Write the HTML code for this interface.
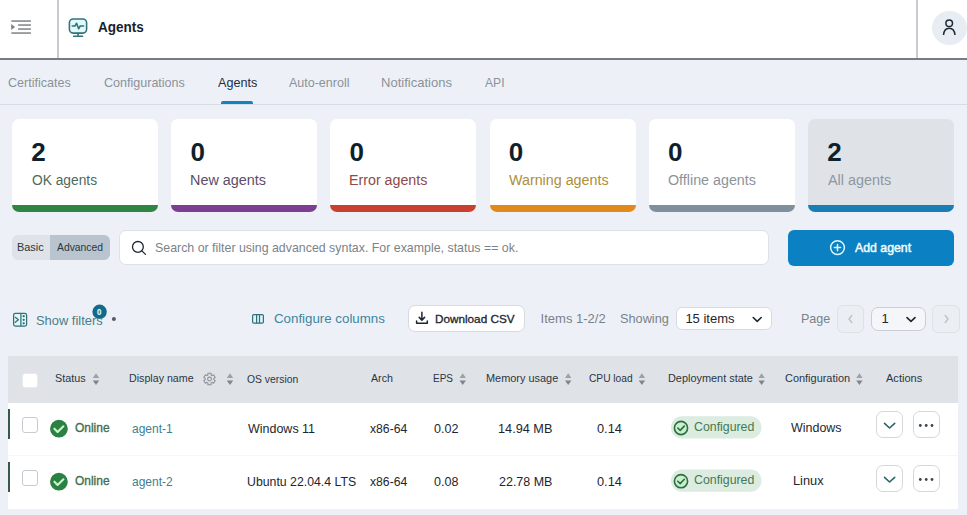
<!DOCTYPE html>
<html><head><meta charset="utf-8"><style>
*{box-sizing:border-box;margin:0;padding:0}
html,body{width:967px;height:515px;overflow:hidden}
body{background:#edf1f7;font-family:"Liberation Sans",sans-serif;position:relative}
.a{position:absolute}
.t{position:absolute;white-space:nowrap}
svg{position:absolute;overflow:visible}
.card{position:absolute;top:119px;width:146px;height:93px;background:#fff;border-radius:7px;overflow:hidden}
.card .bar{position:absolute;left:0;bottom:0;width:100%;height:7px}
.cb{position:absolute;width:15px;height:15px;background:#fff;border:1px solid #c5cbd1;border-radius:3px}
.ab{position:absolute;width:27px;height:27px;background:#fff;border:1px solid #d3d8dc;border-radius:7px}

</style></head><body>
<!-- header -->
<div class="a" style="left:0;top:0;width:967px;height:60px;background:#fff;border-bottom:2px solid #777c81"></div>
<div class="a" style="left:57px;top:0;width:2px;height:58px;background:#c8cbcf"></div>
<div class="a" style="left:916px;top:0;width:2px;height:58px;background:#c8cbcf"></div>
<!-- hamburger -->
<svg style="left:0;top:0" width="60" height="58">
  <g fill="#7f8388">
    <rect x="11.3" y="20.3" width="19.6" height="1.5"/>
    <rect x="18.1" y="24.3" width="12.8" height="1.5"/>
    <rect x="18.1" y="28.3" width="12.8" height="1.5"/>
    <rect x="11.3" y="32.3" width="19.6" height="1.5"/>
    <path d="M11.2 24 L15.1 27 L11.2 30 Z"/>
  </g>
</svg>
<!-- monitor icon -->
<svg style="left:0;top:0" width="100" height="58">
  <g fill="none" stroke="#2f7479" stroke-width="1.55" stroke-linecap="round" stroke-linejoin="round">
    <rect x="69.4" y="18.9" width="17.2" height="14.2" rx="3.8" fill="#e3f8fa"/>
    <path d="M72.2 26 L75 26 L76.6 23.2 L78.6 28.8 L80.2 26 L83.6 26"/>
    <path d="M78 33.2 L78 36 M73.6 36.3 L82.6 36.3"/>
  </g>
</svg>
<!-- avatar -->
<div class="a" style="left:932px;top:10.5px;width:34.5px;height:34.5px;border-radius:50%;background:#e8edf3"></div>
<svg style="left:0;top:0" width="967" height="58">
  <g fill="none" stroke="#1f2a35" stroke-width="1.5">
    <circle cx="949.2" cy="23.2" r="3.3"/>
    <path d="M943.5 35 C944 30 946.5 28.3 949.2 28.3 C952 28.3 954.5 30 955 35"/>
  </g>
</svg>
<!-- tabs -->
<div class="a" style="left:0;top:104px;width:967px;height:1px;background:#d6dce3"></div>
<div class="a" style="left:221px;top:100.5px;width:32px;height:3.5px;background:#1383bf;border-radius:2px 2px 0 0"></div>
<!-- cards -->
<div class="card" style="left:12px"><div class="bar" style="background:#2f8642"></div></div>
<div class="card" style="left:171.2px"><div class="bar" style="background:#7b3e90"></div></div>
<div class="card" style="left:330.4px"><div class="bar" style="background:#c9402f"></div></div>
<div class="card" style="left:489.6px"><div class="bar" style="background:#e0891c"></div></div>
<div class="card" style="left:648.8px"><div class="bar" style="background:#7f909c"></div></div>
<div class="card" style="left:808px;background:#dfe3e7"><div class="bar" style="background:#1a7db6"></div></div>
<!-- toggle -->
<div class="a" style="left:12px;top:235px;width:98px;height:25px;border-radius:6px;background:#dfe3e8;overflow:hidden">
  <div class="a" style="left:38px;top:0;width:60px;height:25px;background:#b9c4cf"></div>
</div>
<!-- search -->
<div class="a" style="left:119px;top:230px;width:649.5px;height:35px;border-radius:7px;background:#fff;border:1px solid #dde2e8"></div>
<svg style="left:0;top:0" width="967" height="515">
  <g fill="none" stroke="#1d2630" stroke-width="1.3" stroke-linecap="round">
    <circle cx="137.9" cy="246.9" r="5.4"/>
    <path d="M141.9 250.9 L145.5 254.4"/>
  </g>
</svg>
<!-- add agent -->
<div class="a" style="left:788px;top:230px;width:166px;height:36px;border-radius:6px;background:#0b80c2"></div>
<svg style="left:0;top:0" width="967" height="515">
  <g fill="none" stroke="#d9f7ff" stroke-width="1.5" stroke-linecap="round">
    <circle cx="837.5" cy="247.6" r="6.9"/>
    <path d="M837.5 244.5 V250.7 M834.4 247.6 H840.6"/>
  </g>
</svg>
<!-- toolbar icons -->
<svg style="left:0;top:0" width="967" height="515">
  <g fill="none" stroke="#2f7077" stroke-width="1.25" stroke-linejoin="round">
    <rect x="13.6" y="313.4" width="13" height="12.6" rx="1.8" fill="#e3f7f9"/>
    <path d="M20.9 313.4 V326"/>
    <path d="M15.3 317.3 L18.4 319.8 L15.3 322.3" stroke-linecap="round"/>
  </g>
  <g fill="#2f7077"><circle cx="23.7" cy="316.2" r="1.15"/><circle cx="23.7" cy="319.8" r="1.15"/><circle cx="23.7" cy="323.3" r="1.15"/></g>
  <circle cx="99.6" cy="311.8" r="7.2" fill="#126b8a"/>
  <circle cx="113.9" cy="319" r="2" fill="#4a5e68"/>
  <g fill="none" stroke="#356f7b" stroke-width="1.2">
    <rect x="252.6" y="314.6" width="10.8" height="8.6" rx="1.2" fill="#d8f6f8"/>
    <path d="M256.6 314.6 V323.2 M259.5 314.6 V323.2"/>
  </g>
</svg>
<div class="t" style="left:96.9px;top:307.6px;font-size:9px;line-height:9px;font-weight:700;color:#d0f9ff;-webkit-text-stroke:0.2px #d0f9ff;transform:scaleX(0.88);transform-origin:0 0">0</div>
<!-- download csv -->
<div class="a" style="left:408px;top:305px;width:117px;height:26.5px;border-radius:7px;background:#fff;border:1px solid #d5dbe1"></div>
<svg style="left:0;top:0" width="967" height="515">
  <g fill="none" stroke="#1d2630" stroke-width="1.5" stroke-linecap="round" stroke-linejoin="round">
    <path d="M421.9 312.3 V320 M419.2 317.4 L421.9 320.1 L424.6 317.4"/>
    <path d="M416.6 321 V323.3 H427.3 V321"/>
  </g>
</svg>
<!-- items select -->
<div class="a" style="left:676px;top:307px;width:95.5px;height:23px;border-radius:6px;background:#fff;border:1px solid #d5dbe1"></div>
<div class="a" style="left:837px;top:305px;width:27px;height:28px;border-radius:6px;background:#ebeff4;border:1px solid #dde2e7"></div>
<div class="a" style="left:871px;top:307px;width:54.5px;height:24px;border-radius:7px;background:#f4f6f9;border:1px solid #c9cfd5"></div>
<div class="a" style="left:932px;top:305px;width:27.5px;height:28px;border-radius:6px;background:#ebeff4;border:1px solid #dde2e7"></div>
<svg style="left:0;top:0" width="967" height="515">
  <g fill="none" stroke="#1d2630" stroke-width="1.6" stroke-linecap="round" stroke-linejoin="round">
    <path d="M753.2 317.5 L757.2 321.3 L761.2 317.5"/>
    <path d="M907 317.6 L911 321.3 L915 317.6"/>
  </g>
  <g fill="none" stroke="#b9c1c8" stroke-width="1.3" stroke-linecap="round" stroke-linejoin="round">
    <path d="M851.8 315.5 L849 319 L851.8 322.5"/>
    <path d="M945.2 315.5 L948 319 L945.2 322.5"/>
  </g>
</svg>
<!-- table -->
<div class="a" style="left:8px;top:356px;width:949.5px;height:46.5px;background:#dfe3e8"></div>
<div class="a" style="left:8px;top:402.5px;width:949.5px;height:106px;background:#fff"></div>
<div class="a" style="left:8px;top:454.5px;width:949.5px;height:1px;background:#f6f7f9"></div>
<div class="a" style="left:8px;top:409px;width:2px;height:30px;background:#38594a"></div>
<div class="a" style="left:8px;top:462px;width:2px;height:30px;background:#38594a"></div>
<div class="cb" style="left:22px;top:372.5px;width:15.5px;height:15px;border-color:#e9ecef"></div>
<div class="cb" style="left:22px;top:417px;width:15.5px;height:15.5px"></div>
<div class="cb" style="left:22px;top:470px;width:15.5px;height:15.5px"></div>
<svg style="left:0;top:0" width="967" height="515">
  <path d="M92.8 378 L96.0 373.3 L99.2 378 Z" fill="#9aa1a7"/><path d="M92.8 380.4 L96.0 385 L99.2 380.4 Z" fill="#7f868c"/>
  <path d="M226.8 378 L230.0 373.3 L233.2 378 Z" fill="#9aa1a7"/><path d="M226.8 380.4 L230.0 385 L233.2 380.4 Z" fill="#7f868c"/>
  <path d="M459.5 378 L462.7 373.3 L465.9 378 Z" fill="#9aa1a7"/><path d="M459.5 380.4 L462.7 385 L465.9 380.4 Z" fill="#7f868c"/>
  <path d="M565.0 378 L568.2 373.3 L571.4 378 Z" fill="#9aa1a7"/><path d="M565.0 380.4 L568.2 385 L571.4 380.4 Z" fill="#7f868c"/>
  <path d="M638.7 378 L641.9 373.3 L645.1 378 Z" fill="#9aa1a7"/><path d="M638.7 380.4 L641.9 385 L645.1 380.4 Z" fill="#7f868c"/>
  <path d="M758.4 378 L761.6 373.3 L764.8 378 Z" fill="#9aa1a7"/><path d="M758.4 380.4 L761.6 385 L764.8 380.4 Z" fill="#7f868c"/>
  <path d="M856.2 378 L859.4 373.3 L862.6 378 Z" fill="#9aa1a7"/><path d="M856.2 380.4 L859.4 385 L862.6 380.4 Z" fill="#7f868c"/>
  <path d="M207.87 373.33 L211.13 373.33 L211.11 375.01 L212.15 375.61 L213.60 374.76 L215.22 377.57 L213.76 378.40 L213.76 379.60 L215.22 380.43 L213.60 383.24 L212.15 382.39 L211.11 382.99 L211.13 384.67 L207.87 384.67 L207.89 382.99 L206.85 382.39 L205.40 383.24 L203.78 380.43 L205.24 379.60 L205.24 378.40 L203.78 377.57 L205.40 374.76 L206.85 375.61 L207.89 375.01 Z" fill="none" stroke="#8a9097" stroke-width="1.05" stroke-linejoin="round"/><circle cx="209.5" cy="379" r="1.9" fill="none" stroke="#8a9097" stroke-width="1.05"/>
  <circle cx="58.9" cy="428.7" r="8.9" fill="#2b8043"/><path d="M54.4 428.7 L57.6 432.0 L63.4 426.3" fill="none" stroke="#c8f7c8" stroke-width="2.1" stroke-linecap="round" stroke-linejoin="round"/>
  <rect x="671" y="416.3" width="90.5" height="22.2" rx="11.1" fill="#dcece0"/>
  <circle cx="681" cy="428.0" r="6.6" fill="#c9f0cd" stroke="#2f6e44" stroke-width="1.6"/><path d="M677.8 428.0 L680.2 430.4 L684.3 426.1" fill="none" stroke="#2f6e44" stroke-width="1.6" stroke-linecap="round" stroke-linejoin="round"/>
  <circle cx="58.9" cy="481.7" r="8.9" fill="#2b8043"/><path d="M54.4 481.7 L57.6 485.0 L63.4 479.3" fill="none" stroke="#c8f7c8" stroke-width="2.1" stroke-linecap="round" stroke-linejoin="round"/>
  <rect x="671" y="469.5" width="90.5" height="22.2" rx="11.1" fill="#dcece0"/>
  <circle cx="681" cy="481.2" r="6.6" fill="#c9f0cd" stroke="#2f6e44" stroke-width="1.6"/><path d="M677.8 481.2 L680.2 483.6 L684.3 479.3" fill="none" stroke="#2f6e44" stroke-width="1.6" stroke-linecap="round" stroke-linejoin="round"/>
</svg>
<div class="ab" style="left:876.2px;top:411px"></div><div class="ab" style="left:913px;top:411px"></div>
<div class="ab" style="left:876.2px;top:465px"></div><div class="ab" style="left:913px;top:465px"></div>
<svg style="left:0;top:0" width="967" height="515">
  <path d="M884.5 423.3 L889.6 428 L894.7 423.3" fill="none" stroke="#2c6468" stroke-width="1.6" stroke-linecap="round" stroke-linejoin="round"/>
  <circle cx="920.3" cy="425.5" r="1.4" fill="#3a4650"/>
  <circle cx="926.2" cy="425.5" r="1.4" fill="#3a4650"/>
  <circle cx="932" cy="425.5" r="1.4" fill="#3a4650"/>
  <path d="M884.5 477.3 L889.6 482 L894.7 477.3" fill="none" stroke="#2c6468" stroke-width="1.6" stroke-linecap="round" stroke-linejoin="round"/>
  <circle cx="920.3" cy="479.5" r="1.4" fill="#3a4650"/>
  <circle cx="926.2" cy="479.5" r="1.4" fill="#3a4650"/>
  <circle cx="932" cy="479.5" r="1.4" fill="#3a4650"/>
</svg>

<div class="t" style="left:98.10px;top:20.00px;font-size:14px;line-height:14px;font-weight:700;color:#17222c;letter-spacing:0.000px;transform:scaleX(0.9638);transform-origin:0 0;">Agents</div>
<div class="t" style="left:7.70px;top:76.00px;font-size:13px;line-height:13px;font-weight:400;color:#8a929a;letter-spacing:0.000px;transform:scaleX(0.9662);transform-origin:0 0;">Certificates</div>
<div class="t" style="left:103.90px;top:76.00px;font-size:13px;line-height:13px;font-weight:400;color:#8a929a;letter-spacing:0.000px;transform:scaleX(0.9643);transform-origin:0 0;">Configurations</div>
<div class="t" style="left:217.50px;top:76.00px;font-size:13px;line-height:13px;font-weight:400;color:#1f2d3d;letter-spacing:0.000px;transform:scaleX(0.9700);transform-origin:0 0;">Agents</div>
<div class="t" style="left:289.30px;top:76.00px;font-size:13px;line-height:13px;font-weight:400;color:#8a929a;letter-spacing:0.000px;transform:scaleX(0.9613);transform-origin:0 0;">Auto-enroll</div>
<div class="t" style="left:381.00px;top:76.00px;font-size:13px;line-height:13px;font-weight:400;color:#8a929a;letter-spacing:0.000px;transform:scaleX(1.0029);transform-origin:0 0;">Notifications</div>
<div class="t" style="left:485.20px;top:76.00px;font-size:13px;line-height:13px;font-weight:400;color:#8a929a;letter-spacing:0.000px;transform:scaleX(0.9300);transform-origin:0 0;">API</div>
<div class="t" style="left:31.20px;top:139.00px;font-size:26px;line-height:26px;font-weight:700;color:#0f1f2c;letter-spacing:0.000px;">2</div>
<div class="t" style="left:31.60px;top:173.00px;font-size:14px;line-height:14px;font-weight:400;color:#4f6a5b;letter-spacing:0.000px;transform:scaleX(0.9833);transform-origin:0 0;">OK agents</div>
<div class="t" style="left:190.40px;top:139.00px;font-size:26px;line-height:26px;font-weight:700;color:#0f1f2c;letter-spacing:0.000px;">0</div>
<div class="t" style="left:189.77px;top:173.00px;font-size:14px;line-height:14px;font-weight:400;color:#5b4d68;letter-spacing:0.000px;transform:scaleX(1.0274);transform-origin:0 0;">New agents</div>
<div class="t" style="left:349.60px;top:139.00px;font-size:26px;line-height:26px;font-weight:700;color:#0f1f2c;letter-spacing:0.000px;">0</div>
<div class="t" style="left:348.98px;top:173.00px;font-size:14px;line-height:14px;font-weight:400;color:#8d4a47;letter-spacing:0.000px;transform:scaleX(1.0171);transform-origin:0 0;">Error agents</div>
<div class="t" style="left:508.80px;top:139.00px;font-size:26px;line-height:26px;font-weight:700;color:#0f1f2c;letter-spacing:0.000px;">0</div>
<div class="t" style="left:509.20px;top:173.00px;font-size:14px;line-height:14px;font-weight:400;color:#ad8e3c;letter-spacing:0.000px;transform:scaleX(1.0206);transform-origin:0 0;">Warning agents</div>
<div class="t" style="left:668.00px;top:139.00px;font-size:26px;line-height:26px;font-weight:700;color:#0f1f2c;letter-spacing:0.000px;">0</div>
<div class="t" style="left:668.40px;top:173.00px;font-size:14px;line-height:14px;font-weight:400;color:#8b949b;letter-spacing:0.000px;transform:scaleX(1.0209);transform-origin:0 0;">Offline agents</div>
<div class="t" style="left:827.20px;top:139.00px;font-size:26px;line-height:26px;font-weight:700;color:#0f1f2c;letter-spacing:0.000px;">2</div>
<div class="t" style="left:827.60px;top:173.00px;font-size:14px;line-height:14px;font-weight:400;color:#8d97a1;letter-spacing:0.000px;transform:scaleX(1.0279);transform-origin:0 0;">All agents</div>
<div class="t" style="left:17.21px;top:242.00px;font-size:11px;line-height:11px;font-weight:400;color:#2a3642;letter-spacing:0.000px;transform:scaleX(0.9923);transform-origin:0 0;">Basic</div>
<div class="t" style="left:57.30px;top:242.00px;font-size:11px;line-height:11px;font-weight:400;color:#2a3642;letter-spacing:0.000px;transform:scaleX(0.9408);transform-origin:0 0;">Advanced</div>
<div class="t" style="left:154.85px;top:241.00px;font-size:13px;line-height:13px;font-weight:400;color:#7b838a;letter-spacing:0.000px;transform:scaleX(0.9524);transform-origin:0 0;">Search or filter using advanced syntax. For example, status == ok.</div>
<div class="t" style="left:855.00px;top:241.00px;font-size:13px;line-height:13px;font-weight:400;color:#f0fcff;letter-spacing:0.000px;transform:scaleX(0.9467);transform-origin:0 0;-webkit-text-stroke:0.35px #f0fcff;-webkit-text-stroke:0.5px #f0fcff;">Add agent</div>
<div class="t" style="left:35.71px;top:314.00px;font-size:13px;line-height:13px;font-weight:400;color:#4b7d88;letter-spacing:0.000px;transform:scaleX(0.9924);transform-origin:0 0;">Show filters</div>
<div class="t" style="left:274.10px;top:312.00px;font-size:13px;line-height:13px;font-weight:400;color:#3b86a0;letter-spacing:0.000px;transform:scaleX(1.0231);transform-origin:0 0;">Configure columns</div>
<div class="t" style="left:435.03px;top:314.00px;font-size:11px;line-height:11px;font-weight:400;color:#1d2630;letter-spacing:0.000px;transform:scaleX(1.0662);transform-origin:0 0;-webkit-text-stroke:0.35px #1d2630;-webkit-text-stroke:0.3px #1d2630;">Download CSV</div>
<div class="t" style="left:540.60px;top:312.00px;font-size:13px;line-height:13px;font-weight:400;color:#7a8289;letter-spacing:0.000px;">Items 1-2/2</div>
<div class="t" style="left:619.52px;top:312.00px;font-size:13px;line-height:13px;font-weight:400;color:#7a8289;letter-spacing:0.000px;transform:scaleX(0.9796);transform-origin:0 0;">Showing</div>
<div class="t" style="left:685.40px;top:312.00px;font-size:13px;line-height:13px;font-weight:400;color:#1d2630;letter-spacing:0.000px;">15 items</div>
<div class="t" style="left:800.93px;top:311.50px;font-size:13px;line-height:13px;font-weight:400;color:#7a8289;letter-spacing:0.000px;transform:scaleX(0.9655);transform-origin:0 0;">Page</div>
<div class="t" style="left:881.50px;top:311.50px;font-size:13px;line-height:13px;font-weight:400;color:#1d2630;letter-spacing:0.000px;">1</div>
<div class="t" style="left:55.00px;top:373.00px;font-size:11.5px;line-height:11.5px;font-weight:400;color:#2a3642;letter-spacing:0.000px;transform:scaleX(0.9375);transform-origin:0 0;">Status</div>
<div class="t" style="left:129.37px;top:373.00px;font-size:11.5px;line-height:11.5px;font-weight:400;color:#2a3642;letter-spacing:0.000px;transform:scaleX(0.9275);transform-origin:0 0;">Display name</div>
<div class="t" style="left:246.90px;top:374.00px;font-size:11.5px;line-height:11.5px;font-weight:400;color:#2a3642;letter-spacing:0.000px;transform:scaleX(0.9000);transform-origin:0 0;">OS version</div>
<div class="t" style="left:370.70px;top:373.00px;font-size:11.5px;line-height:11.5px;font-weight:400;color:#2a3642;letter-spacing:0.000px;transform:scaleX(0.9261);transform-origin:0 0;">Arch</div>
<div class="t" style="left:433.33px;top:373.00px;font-size:11.5px;line-height:11.5px;font-weight:400;color:#2a3642;letter-spacing:0.000px;transform:scaleX(0.8682);transform-origin:0 0;">EPS</div>
<div class="t" style="left:485.95px;top:373.00px;font-size:11.5px;line-height:11.5px;font-weight:400;color:#2a3642;letter-spacing:0.000px;transform:scaleX(0.9493);transform-origin:0 0;">Memory usage</div>
<div class="t" style="left:588.60px;top:373.00px;font-size:11.5px;line-height:11.5px;font-weight:400;color:#2a3642;letter-spacing:0.000px;transform:scaleX(0.8857);transform-origin:0 0;">CPU load</div>
<div class="t" style="left:667.65px;top:373.00px;font-size:11.5px;line-height:11.5px;font-weight:400;color:#2a3642;letter-spacing:0.000px;transform:scaleX(0.9477);transform-origin:0 0;">Deployment state</div>
<div class="t" style="left:784.80px;top:373.00px;font-size:11.5px;line-height:11.5px;font-weight:400;color:#2a3642;letter-spacing:0.000px;transform:scaleX(0.9515);transform-origin:0 0;">Configuration</div>
<div class="t" style="left:886.30px;top:373.00px;font-size:11.5px;line-height:11.5px;font-weight:400;color:#2a3642;letter-spacing:0.000px;transform:scaleX(0.9605);transform-origin:0 0;">Actions</div>
<div class="t" style="left:75.40px;top:422.00px;font-size:12.5px;line-height:12.5px;font-weight:400;color:#3e6f50;letter-spacing:0.000px;transform:scaleX(0.9556);transform-origin:0 0;-webkit-text-stroke:0.35px #3e6f50;">Online</div>
<div class="t" style="left:132.00px;top:422.00px;font-size:13px;line-height:13px;font-weight:400;color:#3f7f8e;letter-spacing:0.000px;transform:scaleX(0.9227);transform-origin:0 0;">agent-1</div>
<div class="t" style="left:248.10px;top:422.00px;font-size:13px;line-height:13px;font-weight:400;color:#1d2630;letter-spacing:0.000px;transform:scaleX(0.9600);transform-origin:0 0;">Windows 11</div>
<div class="t" style="left:370.40px;top:422.00px;font-size:13px;line-height:13px;font-weight:400;color:#1d2630;letter-spacing:0.000px;transform:scaleX(0.9375);transform-origin:0 0;">x86-64</div>
<div class="t" style="left:434.20px;top:422.00px;font-size:13px;line-height:13px;font-weight:400;color:#1d2630;letter-spacing:0.000px;transform:scaleX(0.9640);transform-origin:0 0;">0.02</div>
<div class="t" style="left:498.32px;top:422.00px;font-size:13px;line-height:13px;font-weight:400;color:#1d2630;letter-spacing:0.000px;transform:scaleX(0.9778);transform-origin:0 0;">14.94 MB</div>
<div class="t" style="left:596.50px;top:422.00px;font-size:13px;line-height:13px;font-weight:400;color:#1d2630;letter-spacing:0.000px;transform:scaleX(0.9840);transform-origin:0 0;">0.14</div>
<div class="t" style="left:694.30px;top:420.00px;font-size:13.5px;line-height:13.5px;font-weight:400;color:#437a52;letter-spacing:0.000px;transform:scaleX(0.9136);transform-origin:0 0;">Configured</div>
<div class="t" style="left:791.10px;top:421.00px;font-size:13px;line-height:13px;font-weight:400;color:#1d2630;letter-spacing:0.000px;transform:scaleX(0.9585);transform-origin:0 0;">Windows</div>
<div class="t" style="left:75.40px;top:475.00px;font-size:12.5px;line-height:12.5px;font-weight:400;color:#3e6f50;letter-spacing:0.000px;transform:scaleX(0.9556);transform-origin:0 0;-webkit-text-stroke:0.35px #3e6f50;">Online</div>
<div class="t" style="left:132.00px;top:475.00px;font-size:13px;line-height:13px;font-weight:400;color:#3f7f8e;letter-spacing:0.000px;transform:scaleX(0.9227);transform-origin:0 0;">agent-2</div>
<div class="t" style="left:247.15px;top:475.00px;font-size:13px;line-height:13px;font-weight:400;color:#1d2630;letter-spacing:0.000px;transform:scaleX(0.9456);transform-origin:0 0;">Ubuntu 22.04.4 LTS</div>
<div class="t" style="left:370.40px;top:475.00px;font-size:13px;line-height:13px;font-weight:400;color:#1d2630;letter-spacing:0.000px;transform:scaleX(0.9375);transform-origin:0 0;">x86-64</div>
<div class="t" style="left:434.20px;top:475.00px;font-size:13px;line-height:13px;font-weight:400;color:#1d2630;letter-spacing:0.000px;transform:scaleX(0.9640);transform-origin:0 0;">0.08</div>
<div class="t" style="left:499.30px;top:475.00px;font-size:13px;line-height:13px;font-weight:400;color:#1d2630;letter-spacing:0.000px;transform:scaleX(0.9600);transform-origin:0 0;">22.78 MB</div>
<div class="t" style="left:596.50px;top:475.00px;font-size:13px;line-height:13px;font-weight:400;color:#1d2630;letter-spacing:0.000px;transform:scaleX(0.9840);transform-origin:0 0;">0.14</div>
<div class="t" style="left:694.30px;top:473.00px;font-size:13.5px;line-height:13.5px;font-weight:400;color:#437a52;letter-spacing:0.000px;transform:scaleX(0.9136);transform-origin:0 0;">Configured</div>
<div class="t" style="left:793.02px;top:474.00px;font-size:13px;line-height:13px;font-weight:400;color:#1d2630;letter-spacing:0.000px;transform:scaleX(0.9833);transform-origin:0 0;">Linux</div>
</body></html>
